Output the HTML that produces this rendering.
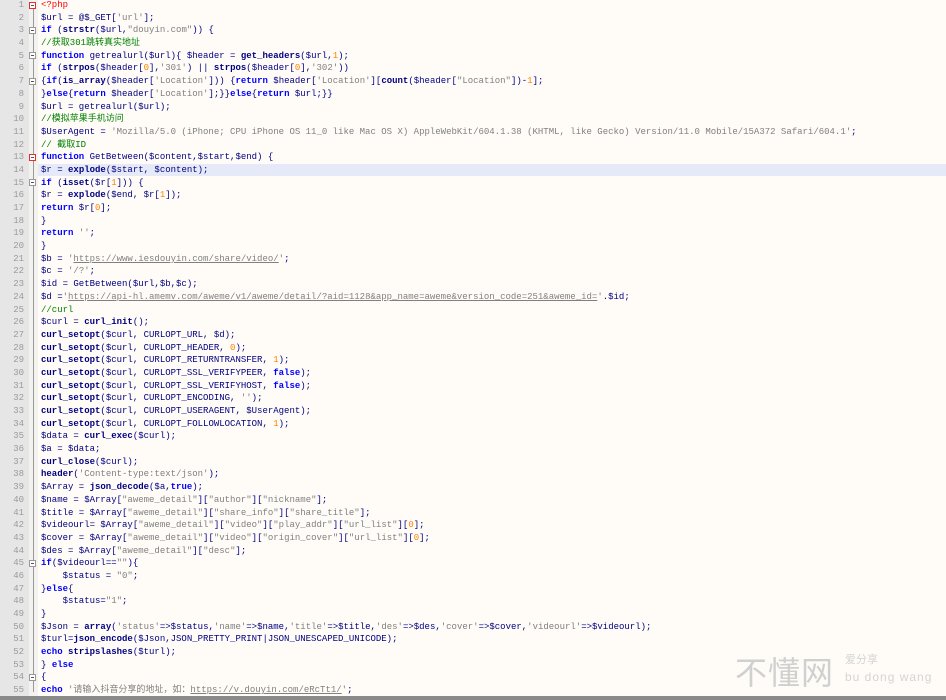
<!DOCTYPE html>
<html><head><meta charset="utf-8"><style>
html,body{margin:0;padding:0;width:946px;height:700px;overflow:hidden;background:#fffcf8;}
#g{position:absolute;left:0;top:0;width:29px;height:697px;background:#e6e6e6;}
#fm{position:absolute;left:29px;top:0;width:9px;height:697px;background:#f4f2ee;}
#vl{position:absolute;left:33px;top:6px;width:1px;height:686px;background:#9a9a9a;}
#hl{position:absolute;left:38px;top:164px;width:908px;height:12px;background:#e6eaf8;}
#bb{position:absolute;left:0;top:696px;width:946px;height:4px;background:#8a8a8a;}
.ln{position:absolute;left:0;width:24px;text-align:right;font:9px "Liberation Mono",monospace;color:#9a9a9a;line-height:12.69px;}
.fb{position:absolute;left:29px;width:7px;height:7px;border:1px solid #999;background:#fff;box-sizing:border-box;}
.fb:after{content:"";position:absolute;left:1px;top:2px;width:3px;height:1px;background:#555;}
.fb.r{border-color:#e03030;}
#code{position:absolute;left:41px;top:-1px;font:9px "Liberation Mono","Noto Sans CJK SC",monospace;line-height:12.69px;color:#000080;white-space:pre;}
.k{color:#0000ff;font-weight:bold}
.f{color:#000080;font-weight:bold}
.s{color:#808080}
.u{color:#808080;text-decoration:underline}
.c{color:#008000}
.n{color:#ff8000}
.p{color:#ff0000}
#wm{position:absolute;left:735px;top:648px;font:32px "Noto Sans CJK SC",sans-serif;color:#d0d0d0;letter-spacing:1px}
#wm2{position:absolute;left:845px;top:651px;font:11px "Noto Sans CJK SC",sans-serif;color:#d4d4d4;}
#wm3{position:absolute;left:845px;top:670px;font:12px "Liberation Sans",sans-serif;color:#d4d4d4;letter-spacing:1px}
</style></head><body>
<div id="g"></div><div id="fm"></div><div id="hl"></div><div id="vl"></div>
<div class="fb r" style="top:2px"></div>
<div class="fb" style="top:27px"></div>
<div class="fb" style="top:52px"></div>
<div class="fb" style="top:78px"></div>
<div class="fb r" style="top:154px"></div>
<div class="fb" style="top:179px"></div>
<div class="fb" style="top:560px"></div>
<div class="fb" style="top:674px"></div>
<div class="ln" style="top:-1px">1<br>2<br>3<br>4<br>5<br>6<br>7<br>8<br>9<br>10<br>11<br>12<br>13<br>14<br>15<br>16<br>17<br>18<br>19<br>20<br>21<br>22<br>23<br>24<br>25<br>26<br>27<br>28<br>29<br>30<br>31<br>32<br>33<br>34<br>35<br>36<br>37<br>38<br>39<br>40<br>41<br>42<br>43<br>44<br>45<br>46<br>47<br>48<br>49<br>50<br>51<br>52<br>53<br>54<br>55</div>
<div id="code"><span class="p">&lt;?php</span>
$url = @$_GET[<span class="s">'url'</span>];
<span class="k">if</span> (<span class="f">strstr</span>($url,<span class="s">"douyin.com"</span>)) {
<span class="c">//获取301跳转真实地址</span>
<span class="k">function</span> getrealurl($url){ $header = <span class="f">get_headers</span>($url,<span class="n">1</span>);
<span class="k">if</span> (<span class="f">strpos</span>($header[<span class="n">0</span>],<span class="s">'301'</span>) || <span class="f">strpos</span>($header[<span class="n">0</span>],<span class="s">'302'</span>))
{<span class="k">if</span>(<span class="f">is_array</span>($header[<span class="s">'Location'</span>])) {<span class="k">return</span> $header[<span class="s">'Location'</span>][<span class="f">count</span>($header[<span class="s">"Location"</span>])-<span class="n">1</span>];
}<span class="k">else</span>{<span class="k">return</span> $header[<span class="s">'Location'</span>];}}<span class="k">else</span>{<span class="k">return</span> $url;}}
$url = getrealurl($url);
<span class="c">//模拟苹果手机访问</span>
$UserAgent = <span class="s">'Mozilla/5.0 (iPhone; CPU iPhone OS 11_0 like Mac OS X) AppleWebKit/604.1.38 (KHTML, like Gecko) Version/11.0 Mobile/15A372 Safari/604.1'</span>;
<span class="c">// 截取ID</span>
<span class="k">function</span> GetBetween($content,$start,$end) {
$r = <span class="f">explode</span>($start, $content);
<span class="k">if</span> (<span class="f">isset</span>($r[<span class="n">1</span>])) {
$r = <span class="f">explode</span>($end, $r[<span class="n">1</span>]);
<span class="k">return</span> $r[<span class="n">0</span>];
}
<span class="k">return</span> <span class="s">''</span>;
}
$b = <span class="s">'</span><span class="u">https://www.iesdouyin.com/share/video/</span><span class="s">'</span>;
$c = <span class="s">'/?'</span>;
$id = GetBetween($url,$b,$c);
$d =<span class="s">'</span><span class="u">https://api-hl.amemv.com/aweme/v1/aweme/detail/?aid=1128&amp;app_name=aweme&amp;version_code=251&amp;aweme_id=</span><span class="s">'</span>.$id;
<span class="c">//curl</span>
$curl = <span class="f">curl_init</span>();
<span class="f">curl_setopt</span>($curl, CURLOPT_URL, $d);
<span class="f">curl_setopt</span>($curl, CURLOPT_HEADER, <span class="n">0</span>);
<span class="f">curl_setopt</span>($curl, CURLOPT_RETURNTRANSFER, <span class="n">1</span>);
<span class="f">curl_setopt</span>($curl, CURLOPT_SSL_VERIFYPEER, <span class="k">false</span>);
<span class="f">curl_setopt</span>($curl, CURLOPT_SSL_VERIFYHOST, <span class="k">false</span>);
<span class="f">curl_setopt</span>($curl, CURLOPT_ENCODING, <span class="s">''</span>);
<span class="f">curl_setopt</span>($curl, CURLOPT_USERAGENT, $UserAgent);
<span class="f">curl_setopt</span>($curl, CURLOPT_FOLLOWLOCATION, <span class="n">1</span>);
$data = <span class="f">curl_exec</span>($curl);
$a = $data;
<span class="f">curl_close</span>($curl);
<span class="f">header</span>(<span class="s">'Content-type:text/json'</span>);
$Array = <span class="f">json_decode</span>($a,<span class="k">true</span>);
$name = $Array[<span class="s">"aweme_detail"</span>][<span class="s">"author"</span>][<span class="s">"nickname"</span>];
$title = $Array[<span class="s">"aweme_detail"</span>][<span class="s">"share_info"</span>][<span class="s">"share_title"</span>];
$videourl= $Array[<span class="s">"aweme_detail"</span>][<span class="s">"video"</span>][<span class="s">"play_addr"</span>][<span class="s">"url_list"</span>][<span class="n">0</span>];
$cover = $Array[<span class="s">"aweme_detail"</span>][<span class="s">"video"</span>][<span class="s">"origin_cover"</span>][<span class="s">"url_list"</span>][<span class="n">0</span>];
$des = $Array[<span class="s">"aweme_detail"</span>][<span class="s">"desc"</span>];
<span class="k">if</span>($videourl==<span class="s">""</span>){
    $status = <span class="s">"0"</span>;
}<span class="k">else</span>{
    $status=<span class="s">"1"</span>;
}
$Json = <span class="f">array</span>(<span class="s">'status'</span>=&gt;$status,<span class="s">'name'</span>=&gt;$name,<span class="s">'title'</span>=&gt;$title,<span class="s">'des'</span>=&gt;$des,<span class="s">'cover'</span>=&gt;$cover,<span class="s">'videourl'</span>=&gt;$videourl);
$turl=<span class="f">json_encode</span>($Json,JSON_PRETTY_PRINT|JSON_UNESCAPED_UNICODE);
<span class="k">echo</span> <span class="f">stripslashes</span>($turl);
} <span class="k">else</span>
{
<span class="k">echo</span> <span class="s">'请输入抖音分享的地址，如：</span><span class="u">https://v.douyin.com/eRcTt1/</span><span class="s">'</span>;</div>
<div id="wm">不懂网</div>
<div id="wm2">爱分享</div>
<div id="wm3">bu dong wang</div>
<div id="bb"></div>
</body></html>
